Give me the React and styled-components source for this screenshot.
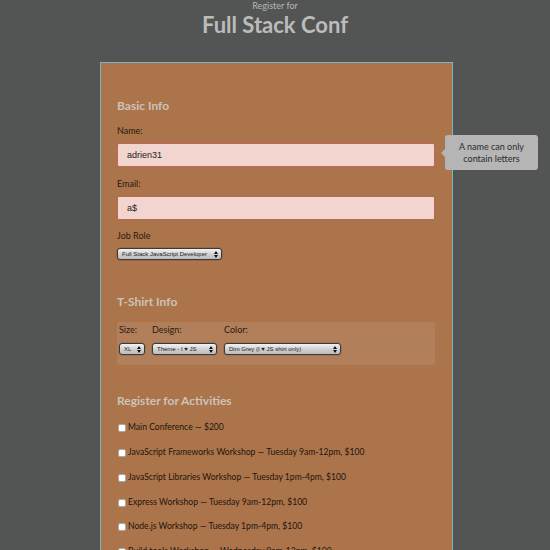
import React from "react";
import styled, { createGlobalStyle } from "styled-components";

const Global = createGlobalStyle`
  html, body { margin: 0; padding: 0; background: #535554; }
  body { font-family: "Lato", "Noto Sans", sans-serif; }
`;

const Page = styled.div`
  min-height: 550px;
  background: #535554;
  overflow: hidden;
`;

const Header = styled.header`
  text-align: center;
  color: #bdbdbd;
`;

const Kicker = styled.div`
  font-size: 9px;
  line-height: 12px;
  color: #b6b6b6;
`;

const Title = styled.h1`
  margin: 0;
  font-size: 22px;
  line-height: 26px;
  font-weight: 700;
  color: #bcbcbc;
`;

const Panel = styled.form`
  box-sizing: border-box;
  width: 353px;
  margin: 24px auto 0 100px;
  background: #ab744b;
  border: 1px solid #78b5c8;
  border-bottom: none;
  padding: 35px 17px 40px 16px;
  position: relative;
`;

const Heading = styled.h2`
  margin: ${(p) => p.$mt || 0}px 0 0;
  font-size: 12px;
  line-height: 16px;
  font-weight: 700;
  color: #ccc3ba;
`;

const Label = styled.div`
  margin-top: ${(p) => p.$mt || 11}px;
  font-size: 9px;
  line-height: 12px;
  color: #2a1a10;
`;

const FieldWrap = styled.div`
  position: relative;
  margin-top: 6px;
`;

const TextInput = styled.div`
  box-sizing: border-box;
  height: 24px;
  width: 100%;
  background: #f2d5cf;
  border: 1px solid #c0675c;
  border-radius: 2px;
  padding: 0 9px;
  display: flex;
  align-items: center;
  font-family: "Liberation Sans", Arial, sans-serif;
  font-size: 9px;
  color: #222;
`;

const Tooltip = styled.div`
  position: absolute;
  left: calc(100% + 10px);
  top: -8px;
  width: 93px;
  height: 35px;
  box-sizing: border-box;
  background: #b5b5b5;
  border-radius: 3px;
  display: flex;
  align-items: center;
  justify-content: center;
  text-align: center;
  font-size: 9px;
  line-height: 12px;
  color: #2b2b2b;
  &::before {
    content: "";
    position: absolute;
    left: -4px;
    top: 14px;
    border-top: 4px solid transparent;
    border-bottom: 4px solid transparent;
    border-right: 4px solid #b5b5b5;
  }
`;

const Select = styled.div`
  box-sizing: border-box;
  width: ${(p) => p.$w}px;
  height: 12px;
  border: 1px solid #3a3a3a;
  border-radius: 3px;
  background: linear-gradient(#f2f2f2, #cfcfcf 55%, #bdbdbd);
  display: flex;
  align-items: center;
  justify-content: space-between;
  padding: 0 3px 0 4px;
  font-family: "Liberation Sans", Arial, sans-serif;
  font-size: 6px;
  color: #222;
  white-space: nowrap;
  overflow: hidden;
  box-shadow: 0 0 0 0.5px rgba(0,0,0,0.2);
  & > svg { flex: none; margin-left: 2px; }
`;

const SelectBlock = styled.div`
  margin-top: ${(p) => p.$mt || 6}px;
`;

const Arrows = () => (
  <svg width="4" height="7" viewBox="0 0 4 7">
    <path d="M0 3 L2 0 L4 3 Z M0 4 L2 7 L4 4 Z" fill="#111" />
  </svg>
);

const ShirtBox = styled.div`
  margin-top: 12px;
  height: 43px;
  box-sizing: border-box;
  background: #b27f5b;
  border-radius: 2px;
  padding: 2px 2px 0;
  display: flex;
  gap: 7px;
`;

const ShirtCol = styled.div`
  display: flex;
  flex-direction: column;
`;

const ShirtLabel = styled.div`
  font-size: 9px;
  line-height: 12px;
  color: #2a1a10;
  margin-bottom: 7px;
`;

const List = styled.div`
  margin-top: 6px;
`;

const Row = styled.label`
  display: flex;
  align-items: center;
  height: 24.75px;
  font-size: 8.6px;
  color: #1f140c;
  gap: 2px;
  padding-left: 1px;
`;

const Check = styled.span`
  box-sizing: border-box;
  width: 8px;
  height: 8px;
  background: #fff;
  border: 1px solid #aaa;
  border-radius: 2px;
  margin-top: 2px;
  flex: none;
`;

const activities = [
  "Main Conference — $200",
  "JavaScript Frameworks Workshop — Tuesday 9am-12pm, $100",
  "JavaScript Libraries Workshop — Tuesday 1pm-4pm, $100",
  "Express Workshop — Tuesday 9am-12pm, $100",
  "Node.js Workshop — Tuesday 1pm-4pm, $100",
  "Build tools Workshop — Wednesday 9am-12pm, $100",
];

export default function App() {
  return (
    <Page>
      <Global />
      <Header>
        <Kicker>Register for</Kicker>
        <Title>Full Stack Conf</Title>
      </Header>
      <Panel>
        <Heading>Basic Info</Heading>
        <Label>Name:</Label>
        <FieldWrap>
          <TextInput>adrien31</TextInput>
          <Tooltip>A name can only<br />contain letters</Tooltip>
        </FieldWrap>
        <Label>Email:</Label>
        <FieldWrap>
          <TextInput>a$</TextInput>
        </FieldWrap>
        <Label $mt={10}>Job Role</Label>
        <SelectBlock>
          <Select $w={105}>Full Stack JavaScript Developer <Arrows /></Select>
        </SelectBlock>

        <Heading $mt={34}>T-Shirt Info</Heading>
        <ShirtBox>
          <ShirtCol>
            <ShirtLabel>Size:</ShirtLabel>
            <Select $w={26}>XL <Arrows /></Select>
          </ShirtCol>
          <ShirtCol>
            <ShirtLabel>Design:</ShirtLabel>
            <Select $w={65}>Theme - I ♥ JS <Arrows /></Select>
          </ShirtCol>
          <ShirtCol>
            <ShirtLabel>Color:</ShirtLabel>
            <Select $w={117}>Dim Grey (I ♥ JS shirt only) <Arrows /></Select>
          </ShirtCol>
        </ShirtBox>

        <Heading $mt={28}>Register for Activities</Heading>
        <List>
          {activities.map((a) => (
            <Row key={a}>
              <Check />
              {a}
            </Row>
          ))}
        </List>
      </Panel>
    </Page>
  );
}
